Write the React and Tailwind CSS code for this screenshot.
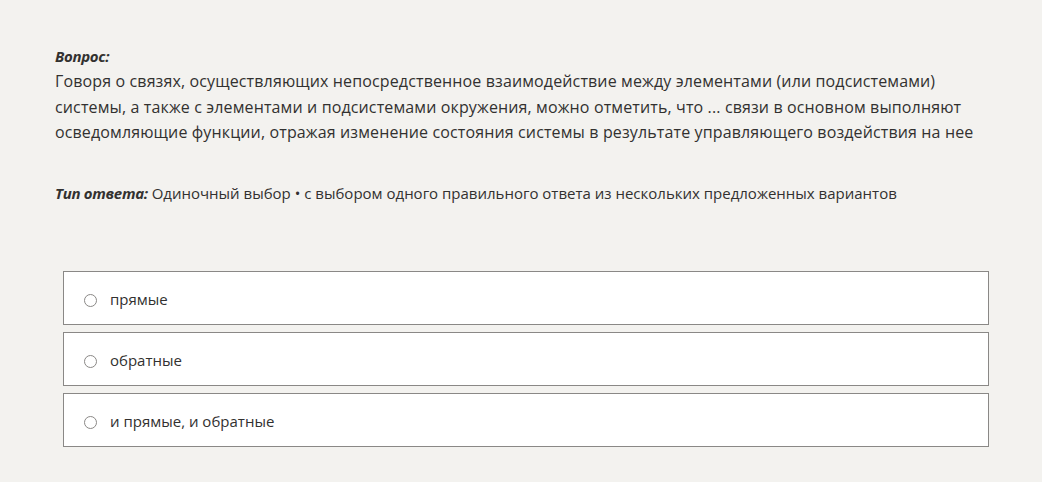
export default function App() {
  const options = ["прямые", "обратные", "и прямые, и обратные"];
  return (
    <div className="min-h-[482px] w-full bg-[#f3f2ef] text-[#323130]" style={{ fontFamily: '"Open Sans", "Noto Sans", sans-serif' }}>
      <div className="pl-[55px] pr-[40px] pt-[46px]">
        <div className="text-[15px] font-bold italic leading-[20px] tracking-[-0.3px]">Вопрос:</div>
        <div className="mt-[3px] w-[960px] text-[16px] leading-[25.5px] tracking-[0.13px]">
          Говоря о связях, осуществляющих непосредственное взаимодействие между элементами (или подсистемами)<br />
          системы, а также с элементами и подсистемами окружения, можно отметить, что ... связи в основном выполняют<br />
          осведомляющие функции, отражая изменение состояния системы в результате управляющего воздействия на нее
        </div>
        <div className="mt-[37px] text-[15px] leading-[20px]">
          <span className="font-bold italic tracking-[-0.3px]">Тип ответа:</span> Одиночный выбор • с выбором одного правильного ответа из нескольких предложенных вариантов
        </div>
      </div>
      <div className="ml-[63px] mt-[68px] flex w-[926px] flex-col gap-[7px] pb-[35px]">
        {options.map((o) => (
          <div key={o} className="flex h-[54px] items-center border border-[#8a8886] bg-white pl-[20px] pt-[3px]">
            <span className="mt-[3px] h-[13px] w-[13px] rounded-full border-[1.5px] border-[#8a8886] bg-white" />
            <span className="ml-[13px] text-[15px] leading-[20px]">{o}</span>
          </div>
        ))}
      </div>
    </div>
  );
}
